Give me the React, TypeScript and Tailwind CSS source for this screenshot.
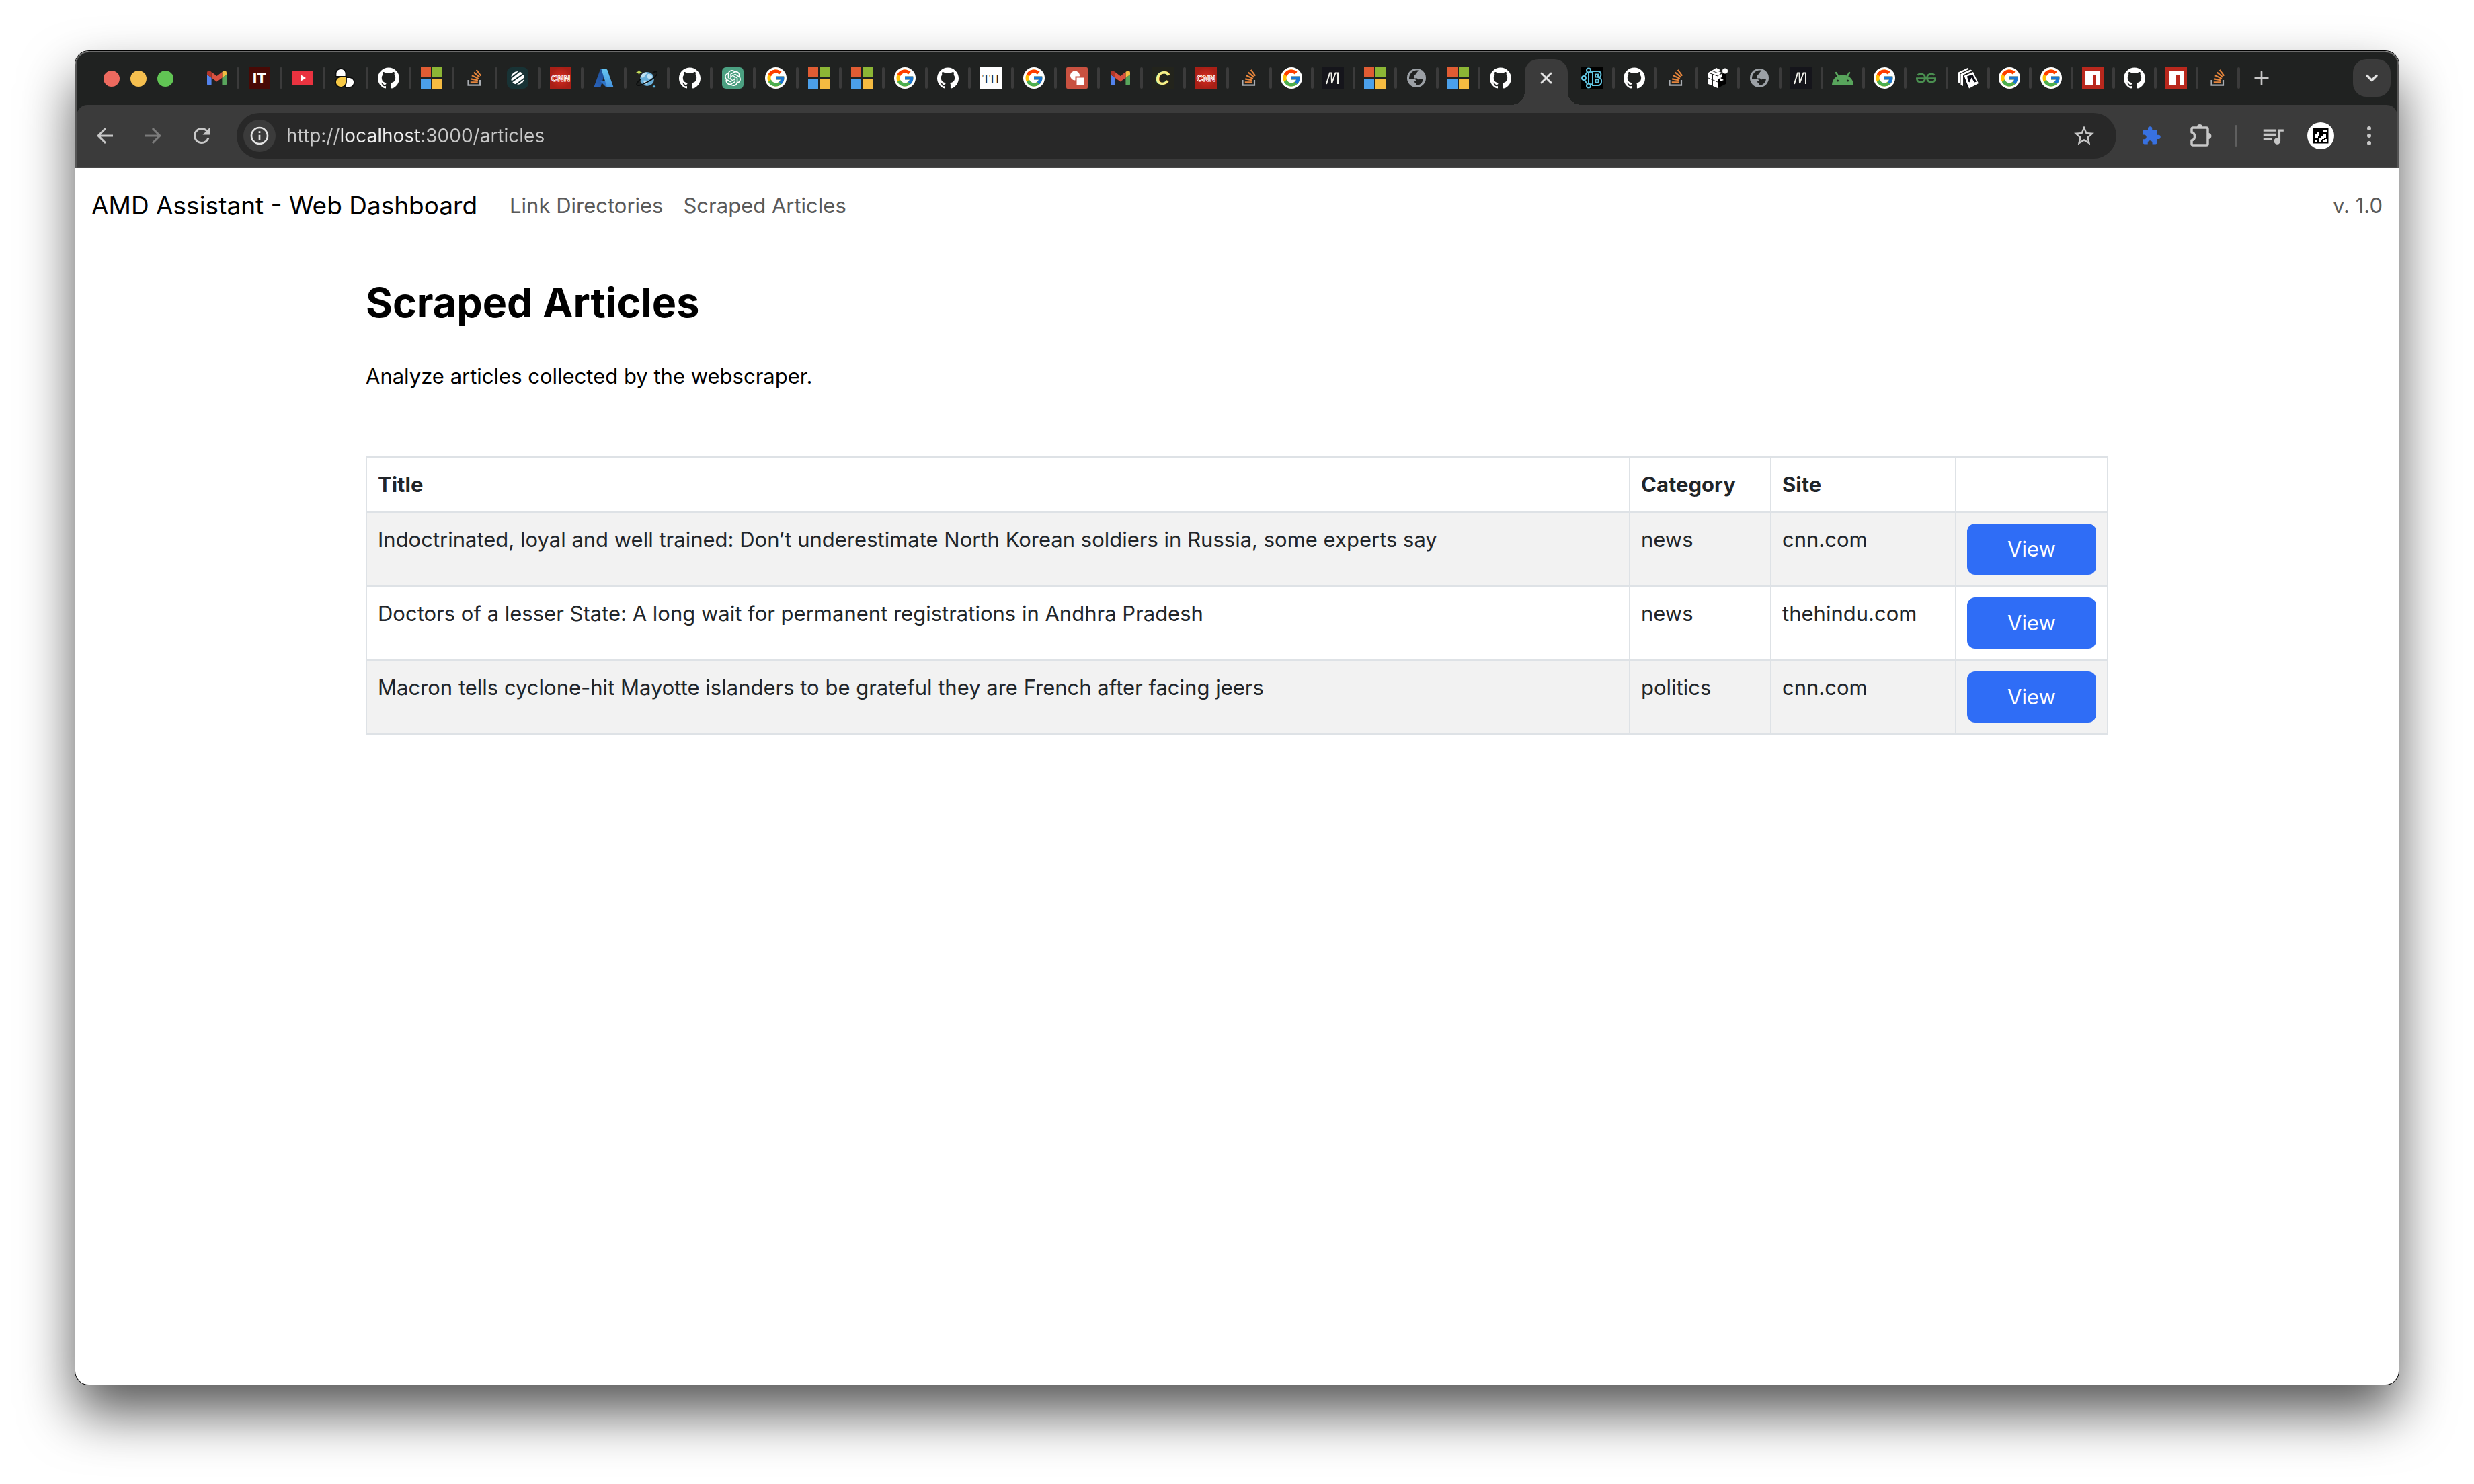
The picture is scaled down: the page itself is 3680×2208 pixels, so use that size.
import type { ReactNode } from "react";
import { ChevronDown, Plus, X } from "lucide-react";
import { SiGithub, SiOpenai, SiGeeksforgeeks } from "react-icons/si";
import { FcGoogle } from "react-icons/fc";
import {
  MdArrowBack,
  MdArrowForward,
  MdExtension,
  MdInfoOutline,
  MdQueueMusic,
  MdRefresh,
  MdStarBorder,
} from "react-icons/md";

function Svg({ children }: { children: ReactNode }) {
  return (
    <svg viewBox="0 0 32 32" className="size-8" aria-hidden="true">
      {children}
    </svg>
  );
}

function Gmail() {
  return (
    <svg viewBox="52 42 88 66" className="h-[22px] w-[29px]" aria-hidden="true">
      <path fill="#5383ec" d="M58 108h14V74L52 59v43c0 3.32 2.69 6 6 6" />
      <path fill="#58a55c" d="M120 108h14c3.32 0 6-2.69 6-6V59l-20 15" />
      <path fill="#f2be42" d="M120 48v26l20-15v-8c0-7.42-8.47-11.65-14.4-7.2" />
      <path fill="#d95140" d="M72 74V48l24 18 24-18v26L96 92" />
      <path fill="#b3362a" d="M52 51v8l20 15V48l-5.6-4.2c-5.94-4.45-14.4-.22-14.4 7.2" />
    </svg>
  );
}

function InsideTech() {
  return (
    <Svg>
      <rect width="32" height="32" fill="#480905" />
      <text x="16" y="24" textAnchor="middle" fill="#fff" fontSize="21" fontWeight="800" fontFamily="Inter, sans-serif">
        IT
      </text>
    </Svg>
  );
}

function YouTube() {
  return (
    <Svg>
      <rect y="5" width="32" height="22" rx="4" fill="#ea3340" />
      <path d="M13 11l8 5-8 5z" fill="#fff" />
    </Svg>
  );
}

function Bee() {
  return (
    <Svg>
      <g stroke="#0c0d0d" strokeWidth="1.8">
        <path d="M1.500 14V9.500a7.500 7.500 0 0 1 15 0V14z" fill="#fff" />
        <path d="M16 15h5.500a7.500 7.500 0 0 1 0 15H16z" fill="#fff" />
        <path d="M9 14h8v8a8 8 0 1 1-8-8z" fill="#f6c945" />
      </g>
    </Svg>
  );
}

function Github() {
  return <SiGithub className="size-8 text-white" aria-hidden="true" />;
}

function Microsoft() {
  return (
    <Svg>
      <path fill="#e05c33" d="M0 0h15v15H0z" />
      <path fill="#8cb635" d="M17 0h15v15H17z" />
      <path fill="#4ba0ea" d="M0 17h15v15H0z" />
      <path fill="#f5bb41" d="M17 17h15v15H17z" />
    </Svg>
  );
}

function StackOverflow() {
  return (
    <svg viewBox="0 0 120 120" className="size-[34px]" aria-hidden="true">
      <path fill="#a9adb2" d="M84.4 93.8V70.6h7.7v30.9H22.6V70.600h7.7v23.2z" />
      <path
        fill="#e6853c"
        d="M38.8 68.4l37.8 7.9 1.6-7.6-37.8-7.9-1.6 7.6zm5-18l35 16.3 3.2-7-35-16.400-3.2 7.1zm9.7-17.2l29.7 24.7 4.9-5.9-29.7-24.7-4.900 5.900zm19.2-18.3l-6.2 4.6 23 31 6.2-4.600-23-31zM38 86h38.600v-7.7H38V86z"
      />
    </svg>
  );
}

function Striped() {
  return (
    <Svg>
      <rect width="32" height="32" rx="8" fill="#183335" />
      <circle cx="16" cy="16" r="10" fill="#fff" />
      <path d="M5 17L20 5M4 24L27 8M12 27L28 15" stroke="#183335" strokeWidth="2" />
    </Svg>
  );
}

function Cnn() {
  return (
    <Svg>
      <radialGradient id="cnn">
        <stop offset="0" stopColor="#d82c20" />
        <stop offset="1" stopColor="#a81f16" />
      </radialGradient>
      <rect width="32" height="32" fill="url(#cnn)" />
      <text x="16" y="21" textAnchor="middle" fill="#c3271c" stroke="#fff" strokeWidth="1" fontSize="13" fontWeight="700" fontFamily="'Liberation Sans', sans-serif">
        CNN
      </text>
    </Svg>
  );
}

function Azure() {
  return (
    <Svg>
      <linearGradient id="az1" x1="0" y1="1" x2="1" y2="0">
        <stop offset="0" stopColor="#2a64bd" />
        <stop offset="1" stopColor="#1c4a8c" />
      </linearGradient>
      <linearGradient id="az2" x1="0" y1="0" x2="0" y2="1">
        <stop offset="0" stopColor="#65c5f0" />
        <stop offset="1" stopColor="#4593df" />
      </linearGradient>
      <path fill="url(#az1)" d="M11 3h8.500L11.500 29a1.500 1.500 0 0 1-1.400 1H3.500A1.500 1.500 0 0 1 2 28z" />
      <path fill="#2f74c6" d="M10 20h11l3 10h-4z" />
      <path fill="url(#az2)" d="M12.500 3H20a1.500 1.500 0 0 1 1.400 1L30 28a1.500 1.500 0 0 1-1.400 2H21z" />
    </Svg>
  );
}

function Planet() {
  return (
    <Svg>
      <circle cx="16.500" cy="17.500" r="10.500" fill="#69aed8" />
      <path d="M8 12c3-5 7-5 9-4-1 3-3 2-4 5s-4 3-5 2zM18 10c4 0 6 2 7 5-3 1-3 3-6 2s-3-5-1-7zM11 20c4-1 7 1 6 4s-5 1-6-4z" fill="#bfe0f2" />
      <path d="M25 8c4-2 7-2 7 0 0 4-7 10-15 14C9 26 2 29 1 26c0-2 2-5 6-8" fill="none" stroke="#0d0f0f" strokeWidth="1.800" />
      <path d="M4.500 3l1.200 3.300L9 7.500 5.700 8.700 4.500 12 3.300 8.700 0 7.500l3.300-1.200z" fill="#c8e05a" />
      <path d="M27 26l.8 1.700 1.700.8-1.700.8L27 31l-.8-1.700-1.700-.8 1.700-.8z" fill="#58b4e0" />
    </Svg>
  );
}

function OpenAi() {
  return (
    <span className="flex size-8 items-center justify-center rounded-md bg-[#4ba081]">
      <SiOpenai className="size-6 text-white" aria-hidden="true" />
    </span>
  );
}

function Google() {
  return (
    <span className="flex size-8 items-center justify-center rounded-full bg-white">
      <FcGoogle className="size-[30px]" aria-hidden="true" />
    </span>
  );
}

function TheHindu() {
  return (
    <Svg>
      <rect width="32" height="32" fill="#fff" />
      <text x="16" y="24" textAnchor="middle" fill="#222" fontSize="19" fontFamily="'Liberation Serif', serif">
        TH
      </text>
    </Svg>
  );
}

function RedShapes() {
  return (
    <Svg>
      <rect width="32" height="32" rx="2" fill="#c95140" />
      <circle cx="13" cy="12.500" r="7" fill="#fff" />
      <rect x="14.500" y="14.500" width="13" height="13" fill="#fff" stroke="#c95140" strokeWidth="2" />
    </Svg>
  );
}

function ScriptC() {
  return (
    <Svg>
      <rect width="32" height="32" fill="#23241c" />
      <text x="15" y="26" textAnchor="middle" fill="#f5f08a" fontSize="30" fontWeight="700" fontStyle="italic" fontFamily="'Liberation Sans', sans-serif">
        C
      </text>
    </Svg>
  );
}

function ZigZag() {
  return (
    <Svg>
      <rect width="32" height="32" fill="#15151b" />
      <path d="M6 25L11 8.500h2.500L14 24L19.500 8.500H23V25" fill="none" stroke="#f0f0ea" strokeWidth="2" />
    </Svg>
  );
}

function Globe() {
  return (
    <Svg>
      <circle cx="16" cy="16" r="14" fill="#9ca1a6" />
      <path
        d="M5 17h6c2.500 0 4.500 1.500 4.500 4h-2.500c0 2 1 2.500 2.500 2.500V27c5.500 0 10-4 10.500-10h-5c-1 2-3 1.500-4-.5h-4v-4c0-1.500 1-2 3-2 0-2.500 1-4 3.500-5.500C12 3 5 9 5 17z"
        fill="#202221"
      />
      <path d="M19 7c3.500 1.500 6 4 6.500 8h-5.500c-1-1.500-2-2-4-2 2.500-1 3.500-3 3-6z" fill="#9ca1a6" />
    </Svg>
  );
}

function BootB() {
  return (
    <Svg>
      <rect width="32" height="32" fill="#000" />
      <g fill="none" stroke="#62c4e0" strokeWidth="2">
        <path d="M17 6h8c5 0 6 7 1.500 9.500C32 17 31 27 25 27h-8z" />
        <path d="M21 10.500h4v4h-4zM21 18.500h5v4h-5z" />
        <circle cx="11" cy="4.500" r="3" />
        <circle cx="4" cy="16" r="3" />
        <circle cx="11" cy="27.500" r="3" />
        <path d="M9 7L5 13M5 19l4 6M11 8v16M17 8l-4-2M17 25l-4 1" />
      </g>
    </Svg>
  );
}

function Cube() {
  return (
    <Svg>
      <path d="M2 8l14 5v18L2 25z" fill="#fff" />
      <path d="M16 13l12-5v17l-12 6z" fill="#000" />
      <path d="M2 8l12-7 6 3-3 2 5 2-6 5z" fill="#fff" />
      <path d="M2 16l14 6M8.500 10v18M7 5l10 4M2 8l14 5 6-4" stroke="#202221" strokeWidth="1" fill="none" />
      <path d="M16 13l6-3v5l-6 3z" fill="#fff" />
      <path d="M20 16l5 3-5 2z" fill="#fff" />
      <circle cx="27" cy="5.500" r="4" fill="#fff" />
    </Svg>
  );
}

function Android() {
  return (
    <Svg>
      <path d="M0 26C.5 17 7 11.500 16 11.500S31.500 17 32 26z" fill="#58a55c" />
      <path d="M6 8l4 6.500M26 8l-4 6.500" stroke="#58a55c" strokeWidth="2.600" strokeLinecap="round" />
      <circle cx="8.500" cy="20" r="1.600" fill="#202221" />
      <circle cx="23.500" cy="20" r="1.600" fill="#202221" />
    </Svg>
  );
}

function Geeks() {
  return <SiGeeksforgeeks className="size-[30px] text-[#4a8f50]" aria-hidden="true" />;
}

function Cards() {
  return (
    <Svg>
      <path d="M1 8l15-7 2 1.500L4 9.500V24l-3-2zM5.500 10L20 3.500l3 1.500-14 6.500V28l-3.500-2z" fill="#fff" />
      <path d="M10 13l14-6 8 17-14 7.500z" fill="#fff" />
      <path d="M10 13l6 17" stroke="#0b0c14" strokeWidth="1.400" />
      <path d="M15 13.500l8-3 6 11-3 1-4.500-7-3 7-1.500-1z" fill="#0b0c14" />
    </Svg>
  );
}

function Npm() {
  return (
    <Svg>
      <rect width="32" height="32" fill="#b9281d" />
      <path d="M5 5h22v22h-6V11h-5v16H5z" fill="#fff" />
    </Svg>
  );
}

type Tab = { name: string; icon: () => ReactNode };

const gmail: Tab = { name: "Gmail", icon: Gmail };
const github: Tab = { name: "GitHub", icon: Github };
const microsoft: Tab = { name: "Microsoft", icon: Microsoft };
const stack: Tab = { name: "Stack Overflow", icon: StackOverflow };
const cnn: Tab = { name: "CNN", icon: Cnn };
const google: Tab = { name: "Google", icon: Google };
const zigzag: Tab = { name: "Docs", icon: ZigZag };
const globe: Tab = { name: "Website", icon: Globe };
const npm: Tab = { name: "npm", icon: Npm };

const wideTabs: Tab[] = [
  gmail,
  { name: "Inside Tech", icon: InsideTech },
  { name: "YouTube", icon: YouTube },
  { name: "Bee", icon: Bee },
  github,
  microsoft,
  stack,
  { name: "Stripes", icon: Striped },
  cnn,
  { name: "Azure", icon: Azure },
  { name: "Planet", icon: Planet },
  github,
  { name: "ChatGPT", icon: OpenAi },
  google,
  microsoft,
  microsoft,
  google,
  github,
  { name: "The Hindu", icon: TheHindu },
  google,
  { name: "Shapes", icon: RedShapes },
  gmail,
  { name: "Script", icon: ScriptC },
  cnn,
  stack,
];

const middleTabs: Tab[] = [google, zigzag, microsoft, globe, microsoft];

const endTabs: Tab[] = [
  github,
  stack,
  { name: "Cube", icon: Cube },
  globe,
  zigzag,
  { name: "Android", icon: Android },
  google,
  { name: "GeeksforGeeks", icon: Geeks },
  { name: "Cards", icon: Cards },
  google,
  google,
  npm,
  github,
  npm,
  stack,
];

function TabButton({ tab, wide, divider = true }: { tab: Tab; wide?: boolean; divider?: boolean }) {
  const Icon = tab.icon;
  return (
    <div className="flex items-center">
      <button
        type="button"
        aria-label={tab.name}
        className={wide || !divider ? "flex h-8 w-[60px] items-center justify-center" : "flex h-8 w-[58px] items-center justify-center"}
      >
        <Icon />
      </button>
      {divider && <span className="h-8 w-1 rounded-full bg-[#3b3b3b]" />}
    </div>
  );
}

function TabStrip() {
  return (
    <div className="flex h-[78px] items-center pr-[10px] pl-10">
      <div className="flex gap-4">
        <button type="button" aria-label="Close window" className="size-6 rounded-full bg-[#ed6a5f]" />
        <button type="button" aria-label="Minimize window" className="size-6 rounded-full bg-[#f5bf4f]" />
        <button type="button" aria-label="Zoom window" className="size-6 rounded-full bg-[#61c554]" />
      </div>
      <div className="ml-[34px] flex h-[76px] min-w-0 flex-1 items-center self-start">
        {wideTabs.map((tab, i) => (
          <TabButton key={i} tab={tab} wide />
        ))}
        {middleTabs.map((tab, i) => (
          <TabButton key={i} tab={tab} />
        ))}
        <TabButton tab={github} divider={false} />
        <div className="relative mx-[6px] mt-[10px] -mb-[2px] flex h-[68px] w-16 shrink-0 justify-center self-start rounded-t-[20px] bg-[#3b3b3b] pt-3">
          <span className="absolute bottom-0 -left-5 size-5 bg-[radial-gradient(circle_at_0_0,transparent_20px,#3b3b3b_20px)]" />
          <span className="absolute -right-5 bottom-0 size-5 bg-[radial-gradient(circle_at_100%_0,transparent_20px,#3b3b3b_20px)]" />
          <button type="button" aria-label="Close tab" className="flex size-8 items-center justify-center text-[#e3e3e3]">
            <X className="size-7" strokeWidth={2.5} />
          </button>
        </div>
        <TabButton tab={{ name: "React Bootstrap", icon: BootB }} wide />
        {endTabs.map((tab, i) => (
          <TabButton key={i} tab={tab} />
        ))}
        <button type="button" aria-label="New tab" className="ml-4 flex size-8 shrink-0 items-center justify-center text-[#c7c7c7]">
          <Plus className="size-8" strokeWidth={2} />
        </button>
        <button type="button" aria-label="Search tabs" className="ml-auto flex size-14 shrink-0 items-center justify-center rounded-[20px] bg-[#3b3b3b] text-[#e3e3e3]">
          <ChevronDown className="size-7" strokeWidth={3} />
        </button>
      </div>
    </div>
  );
}

function ExtensionsIcon() {
  return (
    <svg viewBox="0 0 36 36" className="size-9" aria-hidden="true">
      <path
        d="M4 13V8a2 2 0 0 1 2-2h20a2 2 0 0 1 2 2v22a2 2 0 0 1-2 2H6a2 2 0 0 1-2-2v-5c6-1 6-11 0-12z"
        fill="none"
        stroke="#c7c7c7"
        strokeWidth="3.500"
        strokeLinejoin="round"
      />
      <path d="M12 5a4 4 0 0 1 8 0zM29 14a4.500 4.500 0 0 1 0 9z" fill="#c7c7c7" />
    </svg>
  );
}

function AvatarIcon() {
  return (
    <svg viewBox="0 0 40 40" className="size-10" aria-hidden="true">
      <circle cx="20" cy="20" r="20" fill="#fff" />
      <rect x="8.500" y="8.500" width="23" height="23" fill="#000" />
      <path
        d="M23 11h6v3h-6zM11 17h3v-3h3v6h-1v3h-5zM18 23h3v-3h3v-3h4v6h-3v2h-3v2h-4zM11 26h3v3h-3zM17 27h4v2h-4zM26 25h3v4h-6v-2h3z"
        fill="#fff"
      />
    </svg>
  );
}

function Toolbar() {
  return (
    <div className="flex h-[94px] items-center rounded-t-[16px] border-b-2 border-[#484848] bg-[#3b3b3b] px-6 text-[#c7c7c7]">
      <div className="flex gap-9">
        <button type="button" aria-label="Back">
          <MdArrowBack className="size-9" />
        </button>
        <button type="button" aria-label="Forward" className="text-[#7b7b7b]">
          <MdArrowForward className="size-9" />
        </button>
        <button type="button" aria-label="Reload">
          <MdRefresh className="size-9" />
        </button>
      </div>
      <div className="ml-[34px] flex h-[68px] min-w-0 flex-1 items-center rounded-full bg-[#282828] pr-[30px] pl-[10px]">
        <button
          type="button"
          aria-label="Site information"
          className="flex size-12 shrink-0 items-center justify-center rounded-full bg-[#3b3b3b] text-[#e3e3e3]"
        >
          <MdInfoOutline className="size-8" />
        </button>
        <input
          type="text"
          aria-label="Address"
          defaultValue="http://localhost:3000/articles"
          className="ml-4 h-12 min-w-0 flex-1 bg-[linear-gradient(90deg,#c7c7c7_80px,#ececec_80px,#ececec_200px,#c7c7c7_200px)] bg-clip-text text-[28px] text-transparent outline-none"
        />
        <button type="button" aria-label="Bookmark this page">
          <MdStarBorder className="size-9" />
        </button>
      </div>
      <button type="button" aria-label="Pinned extension" className="ml-[34px] flex size-9 items-center justify-center text-[#3871e0]">
        <MdExtension className="size-[30px]" />
      </button>
      <button type="button" aria-label="Extensions" className="ml-[38px]">
        <ExtensionsIcon />
      </button>
      <span className="ml-8 h-8 w-1 rounded-full bg-[#5f5f5f]" />
      <button type="button" aria-label="Media controls" className="ml-[34px]">
        <MdQueueMusic className="size-[38px]" />
      </button>
      <button type="button" aria-label="Profile" className="ml-8">
        <AvatarIcon />
      </button>
      <button type="button" aria-label="Menu" className="ml-[34px] flex h-9 w-9 flex-col items-center justify-center gap-[5px]">
        <span className="size-[6px] rounded-full bg-[#c7c7c7]" />
        <span className="size-[6px] rounded-full bg-[#c7c7c7]" />
        <span className="size-[6px] rounded-full bg-[#c7c7c7]" />
      </button>
    </div>
  );
}

const articles = [
  {
    title: "Indoctrinated, loyal and well trained: Don’t underestimate North Korean soldiers in Russia, some experts say",
    category: "news",
    site: "cnn.com",
  },
  {
    title: "Doctors of a lesser State: A long wait for permanent registrations in Andhra Pradesh",
    category: "news",
    site: "thehindu.com",
  },
  {
    title: "Macron tells cyclone-hit Mayotte islanders to be grateful they are French after facing jeers",
    category: "politics",
    site: "cnn.com",
  },
];

function ArticlesTable() {
  return (
    <table className="mt-[95px] w-full table-fixed border-collapse text-left align-top text-[31px] leading-[48px] text-[#212529]">
      <thead>
        <tr>
          <th className="border-2 border-[#dee2e6] p-4 font-bold">Title</th>
          <th className="w-[210px] border-2 border-[#dee2e6] p-4 font-bold">Category</th>
          <th className="w-[275px] border-2 border-[#dee2e6] p-4 font-bold">Site</th>
          <th className="w-[226px] border-2 border-[#dee2e6] p-4" aria-label="Actions" />
        </tr>
      </thead>
      <tbody>
        {articles.map((a) => (
          <tr key={a.title} className="align-top odd:bg-[#f2f2f2]">
            <td className="border-2 border-[#dee2e6] p-4">{a.title}</td>
            <td className="border-2 border-[#dee2e6] p-4">{a.category}</td>
            <td className="border-2 border-[#dee2e6] p-4">{a.site}</td>
            <td className="border-2 border-[#dee2e6] p-4">
              <button type="button" className="block w-full rounded-xl bg-[#2f6df6] py-[14px] text-white">
                View
              </button>
            </td>
          </tr>
        ))}
      </tbody>
    </table>
  );
}

export default function App() {
  return (
    <div className="flex min-h-screen flex-col bg-white px-28 pt-[76px] pb-[148px] font-['Inter','Liberation_Sans',sans-serif] text-black">
      <div className="flex flex-1 flex-col overflow-hidden rounded-[20px] bg-white shadow-[0_0_0_1px_#000,0_42px_80px_rgba(0,0,0,0.66)]">
        <header className="rounded-t-[20px] border-x-2 border-t-2 border-x-[#565656] border-t-[#6b6b6b] bg-[#202221]">
          <TabStrip />
          <Toolbar />
        </header>
        <nav className="flex h-28 items-center px-6 text-[31px] leading-[48px] text-[#595959]">
          <a href="#home" className="text-[37px] text-black">
            AMD Assistant - Web Dashboard
          </a>
          <a href="#directories" className="ml-12">
            Link Directories
          </a>
          <a href="#articles" className="ml-[30px]">
            Scraped Articles
          </a>
          <span className="ml-auto">v. 1.0</span>
        </nav>
        <main className="mx-auto w-3/4 pt-12">
          <h1 className="text-[61px] leading-[80px] font-bold">Scraped Articles</h1>
          <p className="mt-[46px] text-[31px] leading-[48px]">Analyze articles collected by the webscraper.</p>
          <ArticlesTable />
        </main>
      </div>
    </div>
  );
}
